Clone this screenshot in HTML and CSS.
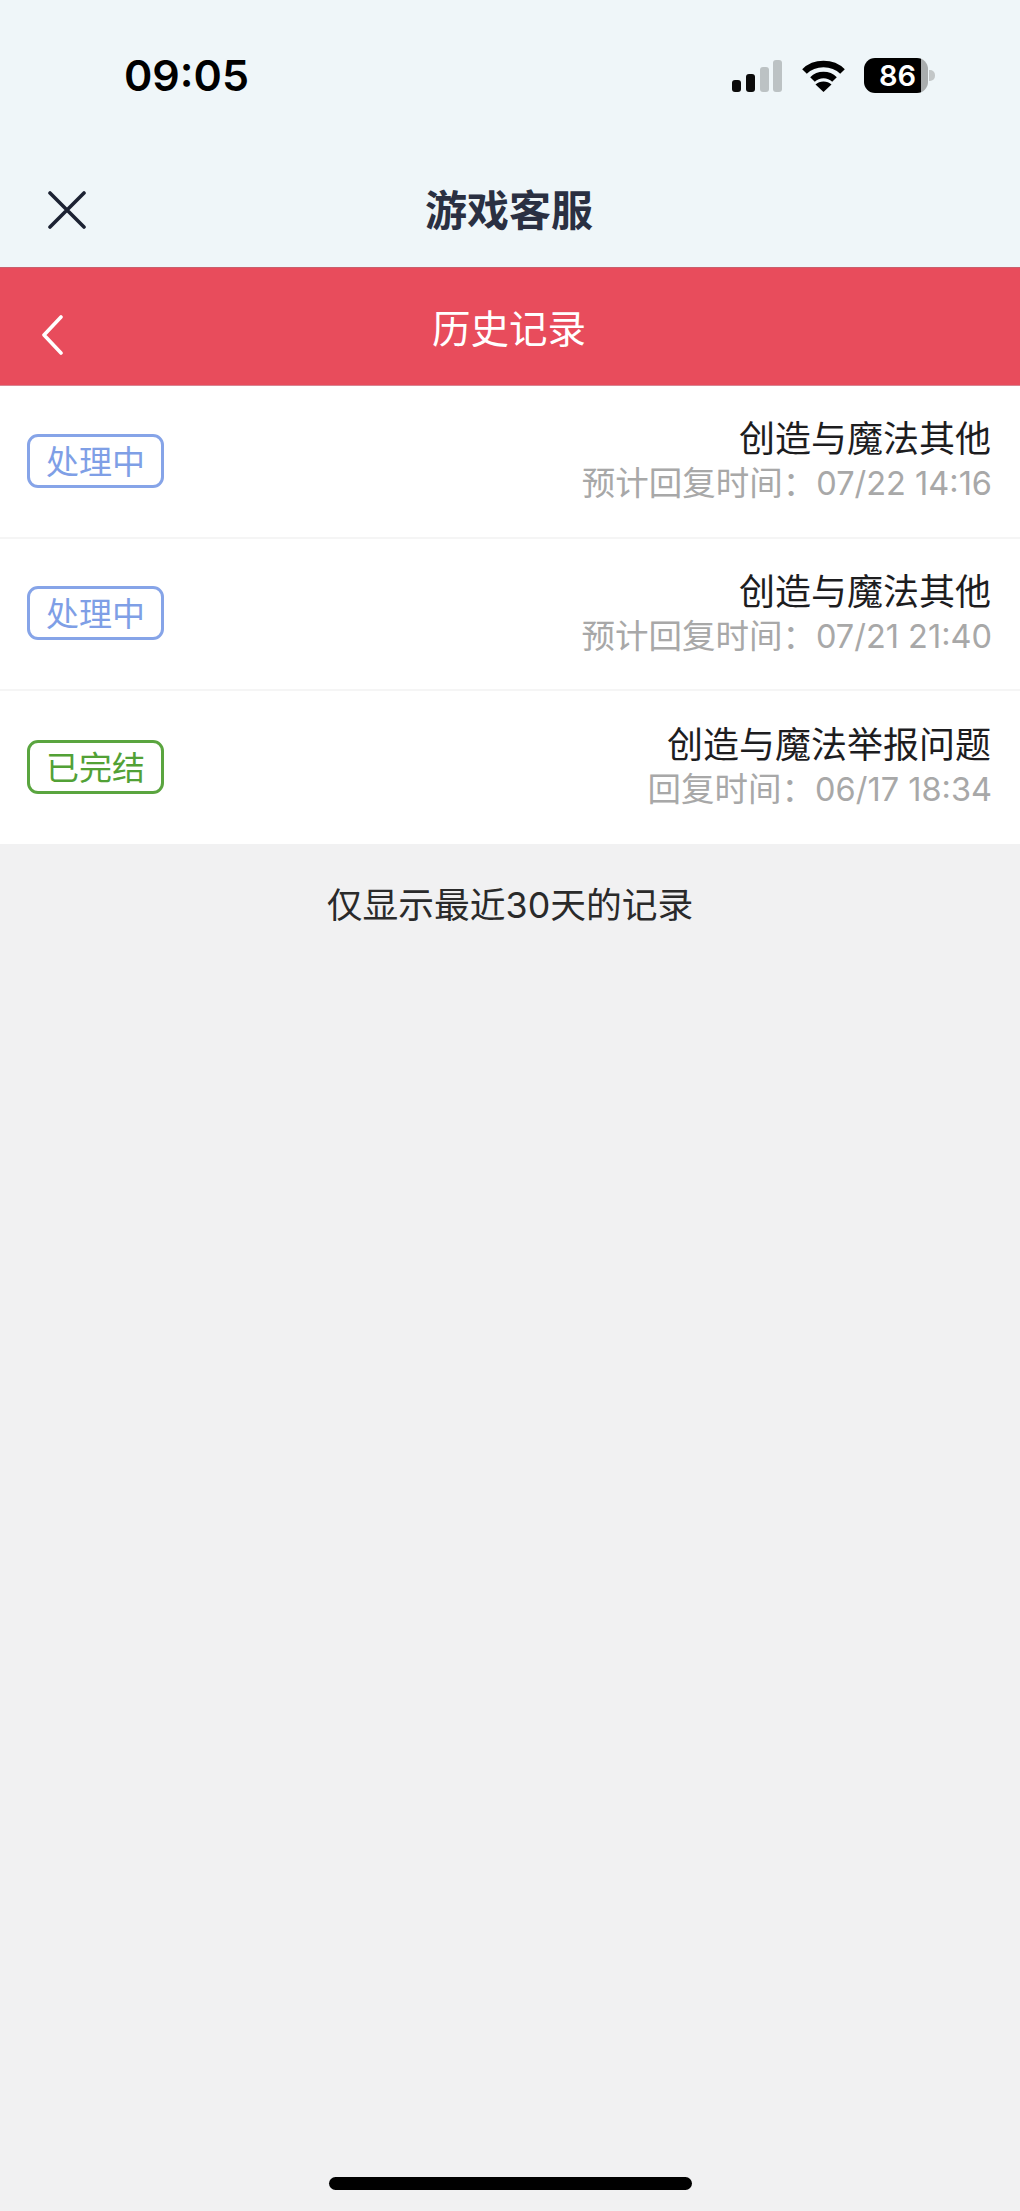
FILE: index.html
```html
<!DOCTYPE html>
<html lang="zh-CN">
<head>
    <meta charset="UTF-8">
    <meta name="viewport" content="width=device-width, initial-scale=1.0">
    <title>游戏客服</title>
    <link rel="stylesheet" href="styles.css">
</head>
<body>
    <header class="top">
        <div class="status-bar">
            <span class="clock">09:05</span>
            <div class="status-icons">
                <svg class="signal" width="50" height="32" viewBox="0 0 50 32">
                    <rect x="0" y="20" width="9" height="12" rx="3" fill="#0b0b0b"/>
                    <rect x="14" y="14" width="9" height="18" rx="3" fill="#0b0b0b"/>
                    <rect x="28" y="7" width="9" height="25" rx="3" fill="#bcc2c4"/>
                    <rect x="41" y="0" width="9" height="32" rx="3" fill="#bcc2c4"/>
                </svg>
                <svg class="wifi" width="43" height="33" viewBox="0 0 43 33">
                    <path d="M2.5 12.5 C12.5 2.5 30.5 2.5 40.5 12.5" fill="none" stroke="#000" stroke-width="6.5"/>
                    <path d="M10.5 20.5 C16.5 14.5 26.5 14.5 32.5 20.5" fill="none" stroke="#000" stroke-width="6.5"/>
                    <path d="M21.5 33 L13.5 25.5 C17.5 21.5 25.5 21.5 29.5 25.5 Z" fill="#000"/>
                </svg>
                <div class="battery">
                    <span class="battery-level">86</span>
                    <span class="battery-rest"></span>
                </div>
                <span class="battery-cap"></span>
            </div>
        </div>
        <div class="nav-bar">
            <svg class="close-icon" width="38" height="38" viewBox="0 0 38 38">
                <path d="M2 2 L36 36 M36 2 L2 36" stroke="#1c2233" stroke-width="3.6" stroke-linecap="round"/>
            </svg>
            <h1>游戏客服</h1>
        </div>
    </header>

    <div class="sub-bar">
        <svg class="back-icon" width="22" height="40" viewBox="0 0 22 40">
            <path d="M20 2 L3 20 L20 38" fill="none" stroke="#fff" stroke-width="3.6" stroke-linecap="round" stroke-linejoin="round"/>
        </svg>
        <h2>历史记录</h2>
    </div>

    <main>
        <ul class="record-list">
            <li class="record">
                <span class="tag tag-open">处理中</span>
                <div class="record-info">
                    <p class="record-title">创造与魔法其他</p>
                    <p class="record-time">预计回复时间：<span class="time-value">07/22 14:16</span></p>
                </div>
            </li>
            <li class="record">
                <span class="tag tag-open">处理中</span>
                <div class="record-info">
                    <p class="record-title">创造与魔法其他</p>
                    <p class="record-time">预计回复时间：<span class="time-value">07/21 21:40</span></p>
                </div>
            </li>
            <li class="record">
                <span class="tag tag-done">已完结</span>
                <div class="record-info">
                    <p class="record-title">创造与魔法举报问题</p>
                    <p class="record-time">回复时间：<span class="time-value">06/17 18:34</span></p>
                </div>
            </li>
        </ul>
        <p class="note">仅显示最近30天的记录</p>
    </main>

    <div class="home-bar"><span></span></div>
</body>
</html>
```

FILE: styles.css
```css
* {
    box-sizing: border-box;
}

body {
    margin: 0;
    min-height: 100vh;
    display: flex;
    flex-direction: column;
    background: #f1f1f2;
    color: #1d1d1f;
    font-family: "Noto Sans CJK SC", "Inter", sans-serif;
}

h1, h2, p, ul {
    margin: 0;
    padding: 0;
}

/* 顶部 */
.top {
    height: 267px;
    background: #eff6f9;
}

.status-bar {
    height: 150px;
    padding: 48px 85px 0 124px;
    display: flex;
    justify-content: space-between;
    align-items: flex-start;
}

.clock {
    font-family: "Inter", sans-serif;
    font-size: 43px;
    font-weight: 600;
    line-height: 54px;
    color: #000;
}

.status-icons {
    display: flex;
    align-items: center;
    margin-top: 10px;
}

.signal {
    margin-right: 20px;
}

.wifi {
    margin-right: 19px;
}

.battery {
    width: 64px;
    height: 35px;
    display: flex;
    border-radius: 11px;
    overflow: hidden;
}

.battery-level {
    flex: 1;
    background: #000;
    color: #fff;
    font-family: "Inter", sans-serif;
    font-size: 29px;
    font-weight: 600;
    line-height: 35px;
    text-align: right;
    padding-right: 5px;
}

.battery-rest {
    width: 7px;
    background: #a9adae;
}

.battery-cap {
    width: 6px;
    height: 11px;
    margin-left: 1px;
    background: #c3c7c8;
    border-radius: 0 5px 5px 0;
}

.nav-bar {
    height: 117px;
    padding: 3px 0 0 48px;
    display: flex;
    align-items: center;
    position: relative;
}

.nav-bar h1 {
    position: absolute;
    left: 0;
    right: 2px;
    top: 0;
    bottom: 3px;
    display: flex;
    align-items: center;
    justify-content: center;
    font-size: 42px;
    font-weight: 700;
    color: #2a3042;
}

/* 红色标题栏 */
.sub-bar {
    height: 119px;
    background: #e84c5c;
    border-top: 1px solid #c9606e;
    border-bottom: 1px solid #d98592;
    display: flex;
    align-items: center;
    padding: 16px 0 0 41px;
    position: relative;
}

.sub-bar h2 {
    position: absolute;
    left: 0;
    right: 2px;
    top: 0;
    bottom: 2px;
    display: flex;
    align-items: center;
    justify-content: center;
    font-size: 38.5px;
    font-weight: 400;
    color: #fff;
}

/* 列表 */
main {
    flex: 1;
}

.record-list {
    list-style: none;
    background: #fff;
}

.record {
    height: 152.5px;
    padding: 0 28px 0 27px;
    display: flex;
    justify-content: space-between;
    align-items: center;
    border-bottom: 2px solid #f5f5f5;
}

.record:last-child {
    border-bottom: none;
}

.tag {
    width: 137px;
    height: 54px;
    margin-top: -1px;
    border: 3px solid;
    border-radius: 11px;
    font-size: 33px;
    line-height: 46px;
    text-align: center;
}

.tag-open {
    color: #7f9fe6;
    border-color: #86a4e8;
}

.tag-done {
    color: #52a136;
    border-color: #5aa53f;
}

.record-info {
    padding-top: 2px;
    text-align: right;
    font-family: "Inter", "Noto Sans CJK SC", sans-serif;
}

.record-title {
    font-size: 36px;
    line-height: 43px;
    padding-right: 1px;
    color: #1d1d1f;
}

.record-time {
    font-size: 33.5px;
    line-height: 45px;
    color: #a8a8a8;
}

.time-value {
    font-size: 32.5px;
}

.note {
    padding-top: 35px;
    font-family: "Inter", "Noto Sans CJK SC", sans-serif;
    font-size: 35.75px;
    line-height: 52px;
    text-align: center;
    color: #2a2a2a;
}

.home-bar {
    height: 34px;
    display: flex;
    justify-content: center;
}

.home-bar span {
    width: 363px;
    height: 13px;
    border-radius: 7px;
    background: #000;
}
```
